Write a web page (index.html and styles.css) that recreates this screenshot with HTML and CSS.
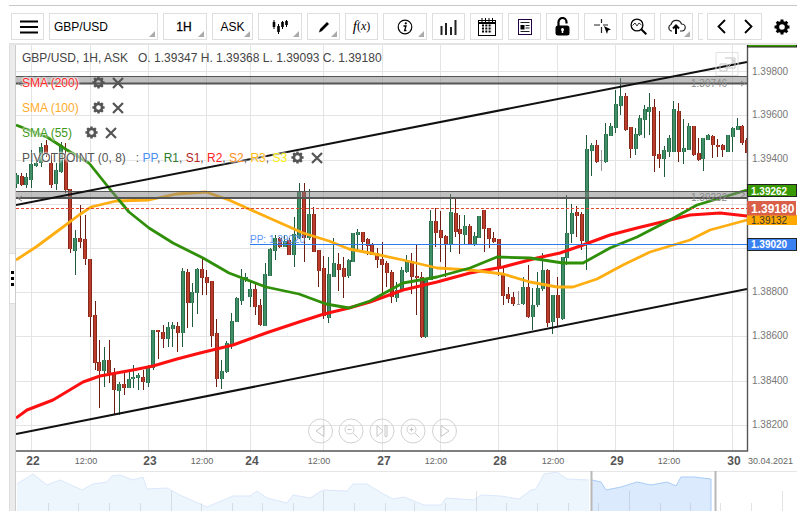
FILE: index.html
```html
<!DOCTYPE html>
<html lang="en">
<head>
<meta charset="utf-8">
<title>GBP/USD chart</title>
<link rel="stylesheet" href="styles.css">
</head>
<body>
<svg class="defs" width="0" height="0" aria-hidden="true">
  <symbol id="gear" viewBox="0 0 16 16">
    <circle cx="8" cy="8" r="4.4" fill="none" stroke="currentColor" stroke-width="3.2"/>
    <path d="M8 .5V3.5M8 12.5V15.5M.5 8H3.5M12.5 8H15.500M2.700 2.700L4.800 4.800M11.200 11.200L13.300 13.300M13.300 2.700L11.200 4.800M4.800 11.200L2.700 13.300" fill="none" stroke="currentColor" stroke-width="3"/>
  </symbol>
  <symbol id="cross" viewBox="0 0 12 12">
    <path d="M1 1L11 11M11 1L1 11" fill="none" stroke="currentColor" stroke-width="2.200"/>
  </symbol>
</svg>

<div class="topline"></div>

<nav class="toolbar">
  <div class="btn w33 menu-btn"><svg class="ico" width="20" height="16" viewBox="0 0 20 16"><path d="M1 2.500H19M1 8H19M1 13.500H19" stroke="#000" stroke-width="2"/></svg></div>
  <div class="btn w109 has-menu symbol">GBP/USD</div>
  <div class="btn w44 has-menu strong">1H</div>
  <div class="btn w41 has-menu">ASK</div>
  <div class="btn w44 has-menu"><svg class="ico" width="16" height="14" viewBox="0 0 16 14"><path d="M2 0V9M6.500 4V14M10.500 1V9M14.500 0V7" stroke="#000" stroke-width="1"/><path d="M2 2V7M6.500 6V12M10.500 2V7M14.500 1V5" stroke="#000" stroke-width="2.600"/></svg></div>
  <div class="btn w33 has-menu"><svg class="ico" width="12" height="12" viewBox="0 0 12 12"><path d="M1 11.500L2 8L9 1L11 3L4 10Z" fill="#000"/></svg></div>
  <div class="btn w33 fx"><i>f</i><span class="fx-x">(<i>x</i>)</span></div>
  <div class="btn w44 has-menu"><svg class="ico" width="16" height="16" viewBox="0 0 16 16"><circle cx="8" cy="8" r="6.800" fill="none" stroke="#000" stroke-width="1.200"/><circle cx="8.800" cy="4.300" r="1.100"/><path d="M6.500 7H9L7.600 11.500H9.400" fill="none" stroke="#000" stroke-width="1.300"/></svg></div>
  <div class="btn w33"><svg class="ico" width="17" height="16" viewBox="0 0 17 16"><path d="M1.500 7V16M6 4V16M11 8V16M15.500 1V16" stroke="#222" stroke-width="2"/></svg></div>
  <div class="btn w33"><svg class="ico" width="18" height="18" viewBox="0 0 18 18"><rect x=".5" y="2.500" width="17" height="15" fill="#fff" stroke="#000"/><path d="M0 5H18" stroke="#000" stroke-width="2"/><path d="M4 0V4M7.500 0V4M11 0V4M14.500 0V4" stroke="#000"/><path d="M4 7.500H14M4 10.500H14M4 13.500H14" stroke="#000" stroke-width="2" stroke-dasharray="2 1.300"/></svg></div>
  <div class="btn w33"><svg class="ico" width="14" height="16" viewBox="0 0 14 16"><rect x=".5" y=".5" width="13" height="15" fill="#fff" stroke="#204"/><path d="M2.500 3.500H11.500M7.500 6.500H11.500M7.500 9H11.500M2.500 12.500H11.500" stroke="#222"/><rect x="2.500" y="6" width="4" height="4.500" fill="#000"/></svg></div>
  <div class="btn w33"><svg class="ico" width="15" height="19" viewBox="0 0 15 19"><path d="M3.500 9V5A4 4 0 0 1 11.500 5V6.500" fill="none" stroke="#000" stroke-width="2.200"/><rect x=".5" y="8.500" width="14" height="10" rx="2.500"/><circle cx="7.500" cy="12.500" r="1.500" fill="#fff"/><path d="M7.500 13V16" stroke="#fff" stroke-width="1.500"/></svg></div>
  <div class="btn w33 cross-btn"><svg class="ico" width="18" height="15" viewBox="0 0 18 15"><path d="M0 6H6M9 6H14M7.500 0V4M7.500 8V14" stroke="#222" stroke-width="1.200"/><path d="M10 7L17 10.500L14 11.500L13 15Z" fill="#000"/></svg></div>
  <div class="btn w33"><svg class="ico" width="17" height="17" viewBox="0 0 17 17"><circle cx="7" cy="7" r="5.900" fill="none" stroke="#000" stroke-width="1.300"/><path d="M2.500 7.500L5 5L7 8L9 5L11.500 7" fill="none" stroke="#333"/><path d="M11 11L16.300 16.300" stroke="#000" stroke-width="2"/></svg></div>
  <div class="btn w33 has-menu"><svg class="ico" width="19" height="15" viewBox="0 0 19 15"><path d="M5 12H4A3.500 3.500 0 0 1 4 5.500A5.500 5.500 0 0 1 14.500 5A3.500 3.500 0 0 1 15 12H13" fill="none" stroke="#222" stroke-width="1.200"/><path d="M9 15V7M6 9.500L9 6.500L12 9.500" fill="none" stroke="#000" stroke-width="2"/></svg></div>
  <div class="btn-stub"></div>
  <div class="btn-pair">
    <div class="pair-half"><svg width="9" height="15" viewBox="0 0 9 15"><path d="M8 1L1.500 7.500L8 14" fill="none" stroke="#000" stroke-width="1.800"/></svg></div>
    <div class="pair-half"><svg width="9" height="15" viewBox="0 0 9 15"><path d="M1 1L7.500 7.500L1 14" fill="none" stroke="#000" stroke-width="1.800"/></svg></div>
  </div>
  <div class="settings"><svg class="gear-big" width="16" height="16"><use href="#gear"/></svg></div>
</nav>

<main class="workspace">
  <aside class="gutter">
    <div class="handle"><span></span><span></span><span></span></div>
  </aside>
  <div class="stage">
    <svg class="plot" width="781" height="466" viewBox="16 45 781 466">
      <g class="grid">
        <path d="M16 71.500H747M16 115.500H747M16 160.500H747M16 204.500H747M16 248.500H747M16 292.500H747M16 336.500H747M16 381.500H747M16 425.500H747"/>
        <path d="M31.500 45V451M90.500 45V451M148.500 45V451M206.500 45V451M250.500 45V451M323.500 45V451M382.500 45V451M440.500 45V451M498.500 45V451M557.500 45V451M615.500 45V451M673.500 45V451M732.500 45V451"/>
      </g>

      <g class="candles">
        <g transform="translate(16 150) scale(.33333)">
          <path class="wick-g" d="M3 70V115M31 70V115M46 0V115M61 20V50M76 -20V50M121 40V120M136 -25V70M178 240V375M265 590V710M310 697V795M340 660V713M352 645V715M367 670V720M397 645V712M412 540V660M457 517V590M470 515V590M500 355V590M529 400V530M544 355V492M617 630V718M632 572V668M647 490V597M662 440V515M677 358V465M689 370V395M703 395V470M748 340V527M763 295V378M778 255V330M806 255V292M835 200V352M850 100V268M880 118V270M938 320V518M953 265V382M998 327V385M1010 250V335M1025 238V305"/>
          <path class="wick-r" d="M18 70V108M91 -30V20M106 10V115M150 -20V130M163 118V310M193 165V295M208 195V345M223 328V560M238 453V660M250 570V775M280 570V700M295 655V795M325 660V735M382 660V720M427 540V627M442 525V595M485 515V605M515 358V535M559 325V435M572 360V435M587 393V590M602 508V710M718 398V495M733 448V527M791 260V295M820 265V315M865 100V335M893 170V305M908 300V410M923 318V508M968 308V422M983 322V443M1040 245V310M1055 265V315"/>
          <path class="body-g-o" d="M3 75V103M31 82V105M46 42V90M61 40V47M76 -10V40M121 60V103M136 -15V65M178 265V302M265 630V662M310 703V722M340 687V713M352 682V686M367 676V684M397 647V698M412 540V653M457 531V568M470 524V537M500 363V548M529 425V458M544 358V430M617 663V688M632 578V667M647 514V585M662 444V515M677 387V452M689 382V390M703 418V440M748 373V527M763 297V377M778 265V302M806 272V290M835 253V314M850 125V265M880 192V265M938 373V505M953 340V381M998 330V378M1010 250V335M1025 246V254"/>
          <path class="body-r-o" d="M18 78V105M91 -15V12M106 40V105M150 20V120M163 118V298M193 265V275M208 267V328M223 328V500M238 495V640M250 635V662M280 630V670M295 668V720M325 703V713M382 682V697M427 540V547M442 546V567M485 528V548M515 365V458M559 357V385M572 380V398M587 393V557M602 548V688M718 418V470M733 465V526M791 265V291M820 270V314M865 125V265M893 192V305M908 300V362M923 355V498M968 342V361M983 354V380M1040 247V275M1055 267V287"/>
          <path class="body-g-i" d="M3 75V103M31 82V105M46 42V90M61 40V47M76 -10V40M121 60V103M136 -15V65M178 265V302M265 630V662M310 703V722M340 687V713M352 682V686M367 676V684M397 647V698M412 540V653M457 531V568M470 524V537M500 363V548M529 425V458M544 358V430M617 663V688M632 578V667M647 514V585M662 444V515M677 387V452M689 382V390M703 418V440M748 373V527M763 297V377M778 265V302M806 272V290M835 253V314M850 125V265M880 192V265M938 373V505M953 340V381M998 330V378M1010 250V335M1025 246V254"/>
          <path class="body-r-i" d="M18 78V105M91 -15V12M106 40V105M150 20V120M163 118V298M193 265V275M208 267V328M223 328V500M238 495V640M250 635V662M280 630V670M295 668V720M325 703V713M382 682V697M427 540V547M442 546V567M485 528V548M515 365V458M559 357V385M572 380V398M587 393V557M602 548V688M718 418V470M733 465V526M791 265V291M820 270V314M865 125V265M893 192V305M908 300V362M923 355V498M968 342V361M983 354V380M1040 247V275M1055 267V287"/>
        </g>
        <g transform="translate(370 70) scale(.33333)">
          <path class="wick-g" d="M80 635V695M95 590V665M110 555V608M167 625V805M182 420V630M242 372V547M284 435V525M314 487V528M328 437V505M460 620V705M488 655V780M503 605V710M518 550V662M548 675V792M578 560V750M590 375V585M605 402V520M650 195V600M665 220V318M708 160V278M722 160V197M737 60V190M752 25V135M797 175V255M809 135V197M824 105V205M838 70V195M883 228V320M898 195V260M911 93V245M941 147V282M956 158V240M1000 205V302M1015 193V210M1073 195V245M1088 172V245M1103 145V180"/>
          <path class="wick-r" d="M7 520V555M22 535V595M37 517V680M50 572V650M65 600V698M125 548V672M140 525V735M155 605V803M197 415V530M212 422V575M227 495V620M257 387V500M269 435V553M299 462V525M343 420V545M358 475V535M372 487V518M386 507V617M400 590V705M415 650V700M430 665V707M475 585V745M533 597V770M563 620V770M620 408V500M635 425V540M680 210V278M767 70V182M782 172V265M853 88V307M868 122V295M926 100V275M971 168V258M986 205V272M1028 195V265M1043 208V262M1058 222V262M1117 165V225M1130 205V250"/>
          <path class="wick-d" d="M445 662V705M695 240V303M440 703H450M690 272H700"/>
          <path class="body-g-o" d="M80 660V684M95 600V660M110 573V605M167 628V800M182 453V630M242 427V522M284 468V494M314 498V525M328 438V503M460 652V702M488 706V740M503 654V706M518 600V658M548 675V757M578 562V747M590 490V565M605 428V492M650 237V515M665 225V242M708 193V275M722 168V197M737 102V173M752 78V107M797 192V238M809 145V196M824 118V150M838 112V125M883 240V268M898 205V245M911 118V245M941 235V245M956 168V240M1000 205V268M1015 195V210M1073 195V245M1088 175V200M1103 168V180"/>
          <path class="body-r-o" d="M7 523V555M22 550V570M37 567V585M50 578V610M65 607V682M125 573V622M140 618V625M155 622V800M197 453V488M212 480V503M227 498V523M257 430V485M269 478V493M299 468V523M343 420V478M358 475V507M372 505V515M386 507V590M400 610V677M415 672V686M430 682V702M475 652V740M533 600V758M563 675V745M620 427V437M635 432V512M680 225V275M767 78V180M782 172V238M853 112V257M868 253V267M926 122V245M971 168V255M986 250V270M1028 197V225M1043 224V230M1058 225V240M1117 168V218M1130 210V250"/>
          <path class="body-g-i" d="M80 660V684M95 600V660M110 573V605M167 628V800M182 453V630M242 427V522M284 468V494M314 498V525M328 438V503M460 652V702M488 706V740M503 654V706M518 600V658M548 675V757M578 562V747M590 490V565M605 428V492M650 237V515M665 225V242M708 193V275M722 168V197M737 102V173M752 78V107M797 192V238M809 145V196M824 118V150M838 112V125M883 240V268M898 205V245M911 118V245M941 235V245M956 168V240M1000 205V268M1015 195V210M1073 195V245M1088 175V200M1103 168V180"/>
          <path class="body-r-i" d="M7 523V555M22 550V570M37 567V585M50 578V610M65 607V682M125 573V622M140 618V625M155 622V800M197 453V488M212 480V503M227 498V523M257 430V485M269 478V493M299 468V523M343 420V478M358 475V507M372 505V515M386 507V590M400 610V677M415 672V686M430 682V702M475 652V740M533 600V758M563 675V745M620 427V437M635 432V512M680 225V275M767 78V180M782 172V238M853 112V257M868 253V267M926 122V245M971 168V255M986 250V270M1028 197V225M1043 224V230M1058 225V240M1117 168V218M1130 210V250"/>
        </g>
      </g>

      <polyline class="sma sma200" points="16,418 27,410 53,400 83,382 100,376 133,370 153,366 177,359 200,353 233,345 266,333 299,322 324,314 349,308 370,302 403,290 437,282 470,273 503,267 537,258 560,253 583,245 610,235 637,228 670,220 690,215 720,213 747,216"/>
      <polyline class="sma sma100" points="16,260 36,247 59,230 79,215 91,207 116,201 149,200 176,194 206,192 229,200 249,209 276,221 303,233 329,241 349,249 370,253 403,260 437,268 470,270 503,274 530,282 557,287 573,287 597,279 623,265 650,252 690,240 710,230 747,220"/>
      <polyline class="sma sma55" points="16,125 47,137 67,150 89,163 109,188 129,212 149,228 173,243 203,258 229,273 266,287 299,294 326,304 349,308 370,301 403,283 437,277 470,268 497,257 530,258 563,263 583,263 610,248 637,237 670,220 697,205 747,190"/>

      <g class="band">
        <rect x="16" y="76.500" width="731" height="7"/>
        <path class="band-top" d="M16 76.500H747"/>
        <path class="band-bot" d="M16 83.500H747"/>
        <rect x="16" y="191.500" width="731" height="6.500"/>
        <path class="band-top" d="M16 191.500H747"/>
        <path class="band-bot" d="M16 198H747"/>
      </g>
      <text class="band-label" x="691" y="87">1.39746</text>
      <text class="band-label" x="691" y="201">1.39232</text>
      <path class="band-arrow" d="M22 81L18 83.500L22 86M22 196L18 198.500L22 201M741 81L745 83.500L741 86M741 192L745 194.500L741 197"/>

      <path class="dash-red" d="M16 208.500H747"/>
      <path class="pp-line" d="M250 244.500H747"/>
      <text class="pp-label" x="250" y="243">PP: 1.39020</text>

      <path class="trend" d="M16 205L747 62M16 434L747 289"/>

      <g class="popout">
        <rect x="716" y="52.500" width="22" height="23"/>
        <path d="M720 64H727V71H720ZM725 58H735V68H725M728 67L734 60M731 60H734V63"/>
      </g>

      <g class="ctrl">
        <circle cx="320.500" cy="431" r="12"/><path d="M324 425.500V436.500L316 431Z"/>
        <circle cx="351" cy="431" r="12"/><circle cx="349.500" cy="429.500" r="4.500"/><path d="M347.500 429.500H351.500M353 433L357.500 437.500"/>
        <circle cx="382" cy="431" r="12"/><path d="M377 425.500V436.500L383 431ZM385 425.500H387V436.500H385Z"/>
        <circle cx="413" cy="431" r="12"/><circle cx="411.500" cy="429.500" r="4.500"/><path d="M409.500 429.500H413.500M411.500 427.500V431.500M415 433L419.500 437.500"/>
        <circle cx="444.500" cy="431" r="12"/><path d="M441 425.500V436.500L449 431Z"/>
      </g>

      <rect class="axis-bg" x="748" y="45" width="49" height="406"/>
      <path class="axis-line" d="M747.500 45V451.500M16 451H748"/>

      <g class="price">
        <text x="752" y="74.500">1.39800</text>
        <text x="752" y="118">1.39600</text>
        <text x="752" y="162">1.39400</text>
        <text x="752" y="295">1.38800</text>
        <text x="752" y="339">1.38600</text>
        <text x="752" y="383.500">1.38400</text>
        <text x="752" y="427.500">1.38200</text>
      </g>

      <rect class="tag tag-green" x="747.500" y="42" width="49" height="5"/>
      <rect class="tag tag-green" x="747.500" y="184.500" width="49" height="12"/>
      <text class="tag-text" x="751" y="194.500">1.39262</text>
      <rect class="tag-orange" x="747" y="215" width="50" height="10"/>
      <text class="tag-text-dark" x="751" y="224">1.39132</text>
      <rect class="tag-red" x="747" y="201" width="49" height="14.500"/>
      <text class="tag-text-big" x="751" y="212.500">1.39180</text>
      <rect class="tag tag-blue" x="747.500" y="238.500" width="49" height="12"/>
      <text class="tag-text" x="751" y="248">1.39020</text>

      <g class="time">
        <text x="86" y="463.500">12:00</text>
        <text x="202" y="463.500">12:00</text>
        <text x="319" y="463.500">12:00</text>
        <text x="436" y="463.500">12:00</text>
        <text x="553" y="463.500">12:00</text>
        <text x="669" y="463.500">12:00</text>
        <text x="770.500" y="463.500">30.04.2021</text>
      </g>
      <g class="day">
        <text x="33" y="464.500">22</text>
        <text x="150" y="464.500">23</text>
        <text x="252" y="464.500">24</text>
        <text x="384" y="464.500">27</text>
        <text x="500" y="464.500">28</text>
        <text x="617" y="464.500">29</text>
        <text x="734" y="464.500">30</text>
      </g>

      <path class="nav-top" d="M16 471.500H797"/>
      <polygon class="nav-area" points="17,511 17,484 33,474 47,485 60,480 82,490 93,484 107,482 112,476 120,475 133,480 143,477 147,489 167,488 180,495 207,507 233,496 250,496 257,491 267,498 287,503 293,495 310,498 323,490 347,491 353,484 367,484 380,492 393,499 404,497 424,505 441,505 446,498 474,500 481,495 501,496 519,499 531,490 536,489 544,474 557,472 567,479 589,480 589,511"/>
      <polyline class="nav-line" points="17,484 33,474 47,485 60,480 82,490 93,484 107,482 112,476 120,475 133,480 143,477 147,489 167,488 180,495 207,507 233,496 250,496 257,491 267,498 287,503 293,495 310,498 323,490 347,491 353,484 367,484 380,492 393,499 404,497 424,505 441,505 446,498 474,500 481,495 501,496 519,499 531,490 536,489 544,474 557,472 567,479 589,480"/>
      <polygon class="nav-area-sel" points="592,511 592,480 601,482 606,490 621,487 637,482 651,485 667,482 676,486 681,477 694,477 711,479 711,511"/>
      <polyline class="nav-line-sel" points="592,480 601,482 606,490 621,487 637,482 651,485 667,482 676,486 681,477 694,477 711,479 711,511"/>
      <path class="nav-ticks" d="M48.500 503V511M78.500 503V511M109.500 503V511M140.500 503V511M171.500 491V511M201.500 503V511M232.500 503V511M262.500 503V511M293.500 503V511M323.500 491V511M354.500 503V511M385.500 503V511M414.500 503V511M445.500 503V511M476.500 491V511M506.500 503V511M537.500 503V511M568.500 503V511M598.500 503V511M629.500 491V511M660.500 503V511M690.500 503V511M720.500 503V511M751.500 503V511M782.500 491V511"/>
      <path class="nav-handle" d="M591.500 471V511M715.500 471V511"/>
    </svg>

    <div class="legend">
      <div class="legend-title">GBP/USD, 1H, ASK   O. 1.39347 H. 1.39368 L. 1.39093 C. 1.39180</div>
      <div class="legend-row c-red"><span>SMA (200)</span><svg class="lg-gear" width="13" height="13"><use href="#gear"/></svg><svg class="lg-x" width="12" height="12"><use href="#cross"/></svg></div>
      <div class="legend-row c-orange"><span>SMA (100)</span><svg class="lg-gear" width="13" height="13"><use href="#gear"/></svg><svg class="lg-x" width="12" height="12"><use href="#cross"/></svg></div>
      <div class="legend-row c-green"><span>SMA (55)</span><svg class="lg-gear" width="13" height="13"><use href="#gear"/></svg><svg class="lg-x" width="12" height="12"><use href="#cross"/></svg></div>
      <div class="legend-row c-grey"><span>PIVOTPOINT (0, 8)</span><span class="pv-list">: <b class="p-pp">PP</b>, <b class="p-r1">R1</b>, <b class="p-s1">S1</b>, <b class="p-r2">R2</b>, <b class="p-s2">S2</b>, <b class="p-r3">R3</b>, <b class="p-s3">S3</b></span><svg class="lg-gear tight" width="13" height="13"><use href="#gear"/></svg><svg class="lg-x" width="12" height="12"><use href="#cross"/></svg></div>
    </div>
  </div>
</main>
</body>
</html>
```
FILE: styles.css
```css
* { box-sizing: border-box; }
html, body { margin: 0; padding: 0; background: #fff; }
body { width: 808px; height: 522px; overflow: hidden; font-family: "Liberation Sans", Arial, sans-serif; font-size: 12px; color: #000; }
.defs { position: absolute; }

.topline { margin: 5px 11px 0 9px; height: 1px; background: #c8c8c8; }

.toolbar { display: flex; align-items: center; gap: 5px; height: 27px; margin-top: 7px; padding-left: 11px; }
.btn { position: relative; display: flex; align-items: center; justify-content: center; height: 27px; border: 1px solid #dedede; background: #fff; }
.w33 { width: 33px; }
.w41 { width: 41px; }
.w44 { width: 44px; }
.w109 { width: 109px; }
.menu-btn { padding-left: 3px; }
.cross-btn { padding-left: 4px; }
.symbol { justify-content: flex-start; padding-left: 4px; }
.strong { font-weight: 400; -webkit-text-stroke: .3px #000; padding-right: 2px; }
.has-menu::after { content: ""; position: absolute; right: 2px; bottom: 2px; border-style: solid; border-width: 0 0 6px 6px; border-color: transparent transparent #aaa transparent; }
.ico { display: block; }
.fx { font-family: "Liberation Serif", serif; font-size: 15px; }
.fx i { font-style: italic; }
.fx-x { font-size: 12px; }
.btn-stub { width: 5px; height: 27px; border: 1px solid #dedede; border-right: 0; }
.btn-pair { display: flex; width: 55px; height: 27px; margin-left: -1px; border: 1px solid #dedede; }
.pair-half { flex: 1; display: flex; align-items: center; justify-content: center; }
.pair-half + .pair-half { border-left: 1px solid #dedede; }
.settings { margin-left: 7px; display: flex; }
.gear-big { color: #000; display: block; }

.workspace { display: flex; height: 468px; margin: 3px 11px 0 9px; border-top: 2px solid #e4e4e4; }
.gutter { flex: none; width: 7px; display: flex; flex-direction: column; justify-content: center; background: #ececec; border-left: 1px solid #ddd; border-right: 1px solid #ccc; }
.handle { height: 51px; display: flex; flex-direction: column; align-items: center; justify-content: center; gap: 3px; background: #fff; border-top: 1px solid #ddd; border-bottom: 1px solid #ddd; }
.handle span { width: 3px; height: 3px; background: #000; }

.stage { position: relative; flex: none; width: 781px; height: 466px; }
.plot { display: block; font-family: "Liberation Sans", Arial, sans-serif; }

.grid path { stroke: #e4e4e4; stroke-width: 1; fill: none; }
.candles { shape-rendering: crispEdges; fill: none; }
.wick-g { stroke: #1f5a3a; stroke-width: 3; }
.wick-r { stroke: #6b1d12; stroke-width: 3; }
.wick-d { stroke: #999; stroke-width: 3; }
.body-g-o { stroke: #2a6b48; stroke-width: 12; }
.body-r-o { stroke: #85291b; stroke-width: 12; }
.body-g-i { stroke: #3f8f68; stroke-width: 6; }
.body-r-i { stroke: #bd3b2a; stroke-width: 6; }

.sma { fill: none; stroke-linejoin: round; }
.sma200 { stroke: #ff1010; stroke-width: 3; }
.sma100 { stroke: #ffae12; stroke-width: 2.800; }
.sma55 { stroke: #2f8f08; stroke-width: 2.800; }

.band rect { fill: rgba(130, 130, 130, .5); }
.band-top { stroke: #555; stroke-width: 1; fill: none; }
.band-bot { stroke: #555; stroke-width: 2; fill: none; }
.band-label { font-size: 10px; fill: #8a8a8a; }
.band-arrow { fill: none; stroke: #888; stroke-width: 1; }

.dash-red { stroke: #e2492f; stroke-width: 1; stroke-dasharray: 3 2; fill: none; }
.pp-line { stroke: #2f7cf0; stroke-width: 1; fill: none; }
.pp-label { font-size: 10px; fill: #5b97f2; }
.trend { stroke: #111; stroke-width: 2; fill: none; }

.popout rect { fill: none; stroke: #e2e2e2; }
.popout path { fill: none; stroke: #c4c4c4; }
.ctrl circle { fill: none; stroke: #d2d2d2; }
.ctrl path { fill: none; stroke: #c6c6c6; }

.axis-bg { fill: #fff; }
.axis-line { stroke: #555; stroke-width: 1.400; fill: none; }
.price text { font-size: 10px; fill: #777; }

.tag { stroke: #222; stroke-width: 1; }
.tag-green { fill: #389a00; }
.tag-blue { fill: #3a82f2; }
.tag-red { fill: #d95f49; }
.tag-orange { fill: #ffa800; }
.tag-text { font-size: 10px; font-weight: 700; fill: #fff; }
.tag-text-dark { font-size: 10px; fill: #333; }
.tag-text-big { font-size: 12px; font-weight: 700; fill: #fff; }

.time text { font-size: 9px; fill: #666; text-anchor: middle; }
.day text { font-size: 12px; font-weight: 700; fill: #555; text-anchor: middle; }

.nav-top { stroke: #e6e6e6; fill: none; }
.nav-area { fill: #edf5fd; }
.nav-line { fill: none; stroke: #dbe8fb; }
.nav-area-sel { fill: #dbebfd; }
.nav-line-sel { fill: none; stroke: #a9ccf8; }
.nav-ticks { stroke: rgba(120, 120, 120, .2); fill: none; }
.nav-handle { stroke: #b8b8b8; stroke-width: 2; fill: none; }

.legend { position: absolute; left: 6px; top: 2px; display: flex; flex-direction: column; }
.legend-title { height: 23px; line-height: 23px; white-space: pre; color: #444; }
.legend-row { display: flex; align-items: center; height: 25px; white-space: pre; text-shadow: 0 0 2px #fff, 0 0 2px #fff, 0 0 3px #fff; }
.c-red { color: #ff2424; }
.c-orange { color: #ffab2b; }
.c-green { color: #3f9a1a; }
.c-grey { color: #555; }
.lg-gear { margin-left: 13px; color: #555; flex: none; }
.lg-gear.tight { margin-left: 4px; }
.lg-x { margin-left: 7px; color: #555; flex: none; }
.pv-list { margin-left: 10px; }
.pv-list b { font-weight: 400; }
.p-pp { color: #4a90f0; }
.p-r1 { color: #2e7d32; }
.p-s1 { color: #b3261e; }
.p-r2 { color: #ff2424; }
.p-s2 { color: #ff8c1a; }
.p-r3 { color: #ffb810; }
.p-s3 { color: #f5e900; }
```
